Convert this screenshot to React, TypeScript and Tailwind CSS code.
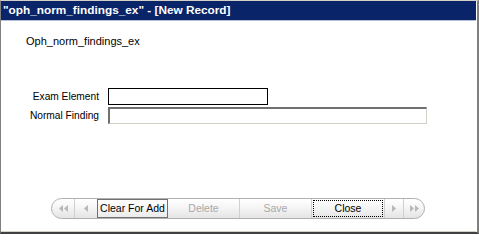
import React from "react";

const Tri = ({ dir, double }: { dir: "l" | "r"; double?: boolean }) => {
  const one = (x: number) =>
    dir === "l"
      ? `M${x + 4} 0 L${x} 3.5 L${x + 4} 7 Z`
      : `M${x} 0 L${x + 4} 3.5 L${x} 7 Z`;
  return (
    <svg width={double ? 9 : 5} height={7} viewBox={`0 0 ${double ? 9 : 5} 7`}>
      <path d={one(0)} fill="#b8b8b8" />
      {double && <path d={one(5)} fill="#b8b8b8" />}
    </svg>
  );
};

export default function App() {
  const font = { fontFamily: '"Liberation Sans", Arial, sans-serif' };
  return (
    <div
      className="w-[479px] h-[234px] bg-white border-t border-t-[#d4d0c8] border-l border-l-[#808080] border-r-2 border-r-[#808080] border-b-2 border-b-[#404040] flex flex-col"
      style={font}
    >
      <div className="h-[20px] bg-[#0a246a] border-b border-[#b8c0dc] flex items-center pl-[2px] mr-[1px]">
        <span className="text-white font-bold text-[11.8px] leading-none whitespace-nowrap">
          "oph_norm_findings_ex" - [New Record]
        </span>
      </div>
      <div className="flex-1 flex flex-col border-b border-[#d4d0c8] mr-[1px]">
        <div className="pl-[25px] pt-[14px] text-[11px] leading-[13px] text-black">
          Oph_norm_findings_ex
        </div>
        <div className="mt-[40px] flex flex-col gap-[2px]">
          <div className="flex items-center">
            <div className="w-[98px] text-right text-[10.2px] leading-[13px] text-black">
              Exam Element
            </div>
            <div className="ml-[9px] w-[160px] h-[17px] border border-black bg-white" />
          </div>
          <div className="flex items-center">
            <div className="w-[98px] text-right text-[10.2px] leading-[13px] text-black">
              Normal Finding
            </div>
            <div className="ml-[9px] w-[319px] h-[17px] border-t-2 border-l-2 border-t-[#707070] border-l-[#707070] border-b border-r border-b-[#d4d0c8] border-r-[#d4d0c8] bg-white" />
          </div>
        </div>
        <div className="mt-[74px] ml-[50px] w-[374px] h-[21px] rounded-full border border-[#b0b0b0] bg-gradient-to-b from-[#ffffff] via-[#f4f4f4] to-[#e4e4e4] flex items-stretch overflow-hidden text-[10.5px]">
          <div className="w-[23px] flex items-center justify-center border-r border-[#d0d0d0]">
            <Tri dir="l" double />
          </div>
          <div className="w-[22px] flex items-center justify-center">
            <Tri dir="l" />
          </div>
          <div className="w-[71px] flex items-center justify-center border border-[#707070] bg-gradient-to-b from-white to-[#ececec] text-black">
            Clear For Add
          </div>
          <div className="w-[72px] flex items-center justify-center border-r border-[#d0d0d0] text-[#a8a8a8]">
            Delete
          </div>
          <div className="w-[72px] flex items-center justify-center border-r border-[#d0d0d0] text-[#a8a8a8]">
            Save
          </div>
          <div className="w-[72px] flex items-center justify-center p-[1px]">
            <div className="w-full h-full border border-dotted border-black flex items-center justify-center text-black">
              Close
            </div>
          </div>
          <div className="w-[20px] flex items-center justify-center border-l border-r border-[#d0d0d0]">
            <Tri dir="r" />
          </div>
          <div className="flex-1 flex items-center justify-center">
            <Tri dir="r" double />
          </div>
        </div>
      </div>
    </div>
  );
}
